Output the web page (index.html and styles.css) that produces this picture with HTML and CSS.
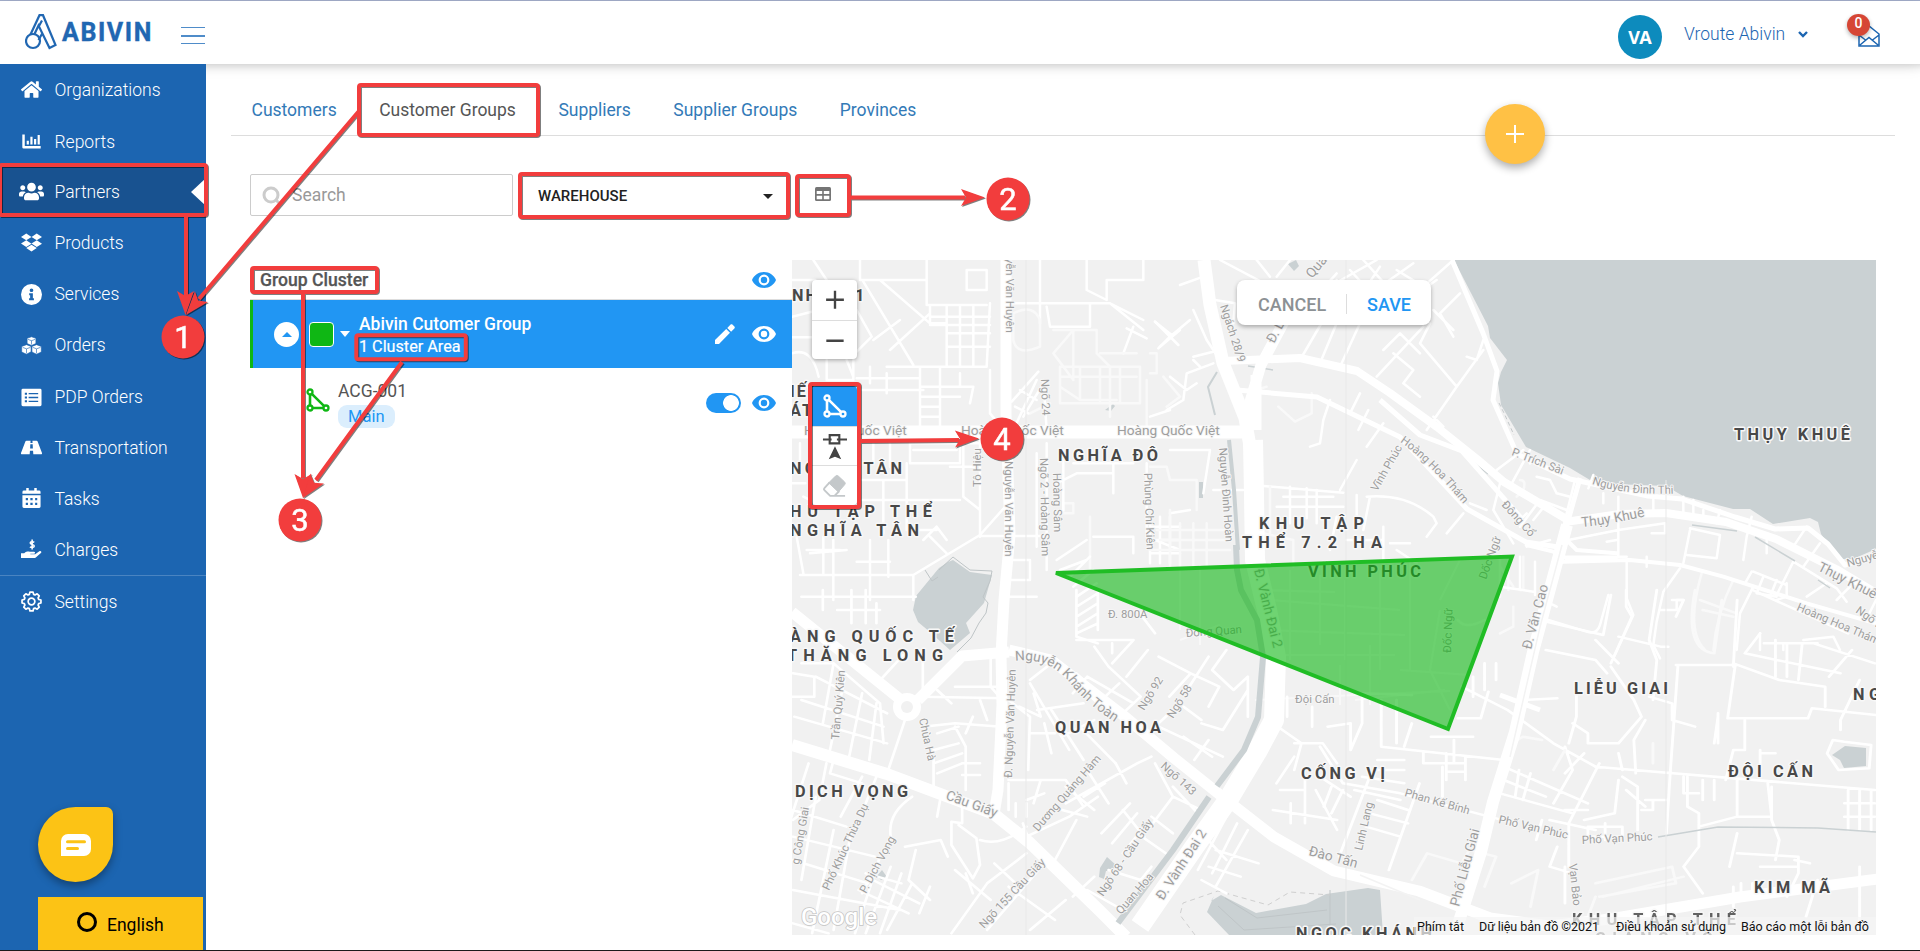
FILE: index.html
```html
<!DOCTYPE html>
<html lang="en">
<head>
<meta charset="utf-8">
<title>Abivin vRoute - Customer Groups</title>
<link rel="stylesheet" href="styles.css">
</head>
<body>
<svg class="defs" aria-hidden="true">
  <symbol id="eye" viewBox="0 0 24 16"><path fill-rule="evenodd" d="M12 0C6.500 0 1.900 3.300 0 8c1.900 4.700 6.500 8 12 8s10.100-3.300 12-8C22.100 3.300 17.500 0 12 0zm0 13.400a5.400 5.400 0 1 1 0-10.800 5.400 5.400 0 0 1 0 10.800zm0-8.600a3.200 3.200 0 1 0 0 6.400 3.200 3.200 0 0 0 0-6.400z"/></symbol>
  <symbol id="poly" viewBox="0 0 24 24"><g fill="none" stroke="currentColor" stroke-width="2.300"><path d="M4 6.500v11M6.500 20H17M5.800 5.800 18.200 18.200" stroke-width="2.600"/><circle cx="4" cy="4" r="2.500"/><circle cx="4" cy="20" r="2.500"/><circle cx="20" cy="20" r="2.500"/></g></symbol>
</svg>
<div class="app">
  <header class="topbar">
    <div class="brand">
      <svg class="brand-mark" viewBox="0 0 32 36"><g fill="none" stroke="#2167b2" stroke-width="2.200"><circle cx="8" cy="27" r="7"/><path d="M5.500 20.500 14.500 1.200h3.500L30.500 31l-6 3L13.500 11.500 9.500 20M14 12l3-5.500M17.500 19l-4 7"/></g></svg>
      <span class="brand-name">ABIVIN</span>
      <span class="burger"><i></i><i></i><i></i></span>
    </div>
    <div class="user">
      <span class="avatar">VA</span>
      <span class="user-name">Vroute Abivin</span>
      <svg class="chev" viewBox="0 0 10 7"><path d="M1 1l4 4 4-4" fill="none" stroke="#1c65b1" stroke-width="2.400"/></svg>
      <span class="mail">
        <svg viewBox="0 0 22 22"><g fill="none" stroke="#1c65b1" stroke-width="1.500"><path d="M1 9 11 1l10 8v12H1zM1 10l6.500 5M21 10l-6.500 5M2 20l9-7.500 9 7.500"/></g></svg>
        <b class="badge">0</b>
      </span>
    </div>
  </header>
  <div class="body">
    <nav class="side">
      <a class="nav"><svg class="ico" viewBox="0 0 576 512"><path d="M280.370 148.260L96 300.110V464a16 16 0 0 0 16 16l112.060-.290a16 16 0 0 0 15.920-16V368a16 16 0 0 1 16-16h64a16 16 0 0 1 16 16v95.640a16 16 0 0 0 16 16.050L464 480a16 16 0 0 0 16-16V300L295.670 148.260a12.190 12.190 0 0 0-15.300 0zM571.600 251.470L488 182.560V44.050a12 12 0 0 0-12-12h-56a12 12 0 0 0-12 12v72.610L318.470 43a48 48 0 0 0-61 0L4.340 251.470a12 12 0 0 0-1.600 16.900l25.500 31A12 12 0 0 0 45.150 301l235.220-193.740a12.190 12.190 0 0 1 15.300 0L530.900 301a12 12 0 0 0 16.900-1.600l25.500-31a12 12 0 0 0-1.700-16.930z"/></svg>Organizations</a>
      <a class="nav low"><svg class="ico" viewBox="0 0 24 20"><path d="M1.500 2h2.800v13H22.500v3H3a1.500 1.500 0 0 1-1.500-1.500zM6.500 9h2.500v4.500H6.500zM10.700 4.500h2.500v9h-2.500zM14.900 7h2.500v6.500h-2.500zM19 2.500h2.500v11H19z"/></svg>Reports</a>
      <a class="nav active"><svg class="ico wide" viewBox="0 0 640 512"><path d="M96 224c35.300 0 64-28.700 64-64s-28.700-64-64-64-64 28.700-64 64 28.700 64 64 64zm448 0c35.300 0 64-28.700 64-64s-28.700-64-64-64-64 28.700-64 64 28.700 64 64 64zm32 32h-64c-17.600 0-33.500 7.100-45.100 18.600 40.300 22.100 68.900 62 75.100 109.400h66c17.700 0 32-14.300 32-32v-32c0-35.300-28.700-64-64-64zm-256 0c61.900 0 112-50.100 112-112S381.900 32 320 32 208 82.100 208 144s50.100 112 112 112zm76.800 32h-8.300c-20.800 10-43.900 16-68.500 16s-47.600-6-68.500-16h-8.300C179.600 288 128 339.600 128 403.200V432c0 26.500 21.500 48 48 48h288c26.500 0 48-21.500 48-48v-28.800c0-63.600-51.600-115.200-115.200-115.200zm-223.700-13.400C161.500 263.100 145.600 256 128 256H64c-35.300 0-64 28.700-64 64v32c0 17.700 14.300 32 32 32h65.900c6.300-47.400 34.900-87.300 75.200-109.400z"/></svg>Partners<i class="notch"></i></a>
      <a class="nav"><svg class="ico" viewBox="0 0 528 512"><path d="M264.400 116.300l-132 84.300 132 84.300-132 84.300L0 284.100l132.300-84.300L0 116.300 132.300 32l132.100 84.300zM131.600 395.700l132-84.300 132 84.300-132 84.300-132-84.300zm132.800-111.600l132-84.300-132-83.600L395.700 32 528 116.300l-132.300 84.300L528 284.800l-132.300 84.300-131.300-85z"/></svg>Products</a>
      <a class="nav"><svg class="ico" viewBox="0 0 20 20"><path fill-rule="evenodd" d="M10 0a10 10 0 1 0 0 20 10 10 0 0 0 0-20zm0 4.200a1.700 1.700 0 1 1 0 3.500 1.700 1.700 0 0 1 0-3.500zM7.800 8.800h3.500v4.700h1v1.900H7.700v-1.900h1v-2.800h-.9z"/></svg>Services</a>
      <a class="nav"><svg class="ico" viewBox="0 0 24 20"><g stroke="#1c65b1" stroke-width=".7"><path d="M12 0l5 1.800v6L12 10 7 7.800v-6zM6.300 9l5.200 2v6.200L6.300 20 .8 17.500V11zM17.700 9l5.500 2v6.500L17.700 20l-5.200-2.500V11z"/><path d="M8 3l4 1.500L16 3M12 4.500V9M2 12.200l4.300 1.600 4.400-1.600M6.300 14v5M13.500 12.200l4.300 1.600 4.400-1.600M17.700 14v5" fill="none"/></g></svg>Orders</a>
      <a class="nav low"><svg class="ico" viewBox="0 0 22 20"><path fill-rule="evenodd" d="M2 .8h18a1.500 1.500 0 0 1 1.500 1.500v15.400a1.500 1.500 0 0 1-1.500 1.500H2a1.500 1.500 0 0 1-1.500-1.500V2.300A1.500 1.500 0 0 1 2 .8zM4 5v2h2.300V5zm4 .3v1.400h10V5.300zM4 9v2h2.300V9zm4 .3v1.400h10V9.300zM4 13v2h2.300v-2zm4 .3v1.400h10v-1.400z"/></svg>PDP Orders</a>
      <a class="nav"><svg class="ico" viewBox="0 0 23 20"><path fill-rule="evenodd" d="M6 2.500h4.500L10.300 5h2.400l-.2-2.500H17c.6 0 1 .3 1.200.8L23 16c.2.700-.2 1.500-1 1.500h-8.500l-.3-4h-3.400l-.3 4H1c-.8 0-1.200-.8-1-1.500L4.800 3.300c.2-.5.600-.8 1.200-.8zM10.200 6.500 10 11h3l-.2-4.500z"/></svg>Transportation</a>
      <a class="nav"><svg class="ico" viewBox="0 0 20 22"><path fill-rule="evenodd" d="M4.500 0h2.600v2.700h5.800V0h2.600v2.700H18a1.500 1.500 0 0 1 1.500 1.500V6H.5V4.200A1.500 1.500 0 0 1 2 2.700h2.500zM.5 7.500h19v12A1.500 1.500 0 0 1 18 21H2a1.500 1.500 0 0 1-1.500-1.500zM4 10.500v2.300h2.300v-2.300zm4.800 0v2.300h2.400v-2.300zm5 0v2.300H16v-2.300zM4 15.500v2.300h2.300v-2.300zm4.800 0v2.300h2.400v-2.300zm5 0v2.300H16v-2.300z"/></svg>Tasks</a>
      <a class="nav"><svg class="ico" viewBox="0 0 23 22"><path d="M0 15h3.500C6 13 8 13 9.500 13.400h4.700c1.600 0 1.600 2.200 0 2.200h-4v.7h5.300l4.600-3.400c1.600-1 3 .8 1.700 2l-5.600 4.800c-.6.500-1 .7-2 .7H0z"/><path d="M14.500 3.200c-.8-.7-4.400-1.200-4.400.8 0 2.200 4.400 1 4.400 3.300 0 2-3.600 1.700-4.700.8M12.200 0v11" fill="none" stroke="#fff" stroke-width="1.700"/></svg>Charges</a>
      <a class="nav last"><svg class="ico" viewBox="-11 -11 22 22"><path d="M9.900-1.600V1.600L7.500 2.200 6.900 3.700 8.100 5.900 5.900 8.100 3.700 6.900 2.200 7.500 1.600 9.900H-1.600L-2.200 7.500-3.700 6.900-5.900 8.100-8.100 5.900-6.900 3.700-7.500 2.200-9.900 1.600V-1.600L-7.500-2.200-6.900-3.700-8.100-5.900-5.900-8.100-3.700-6.900-2.200-7.500-1.600-9.900H1.600L2.200-7.500 3.700-6.900 5.900-8.100 8.100-5.900 6.900-3.700 7.500-2.200z" fill="none" stroke="#fff" stroke-width="1.800" stroke-linejoin="round"/><circle r="3.500" fill="none" stroke="#fff" stroke-width="1.800"/></svg>Settings</a>
      <div class="side-foot">
        <div class="chat"><svg viewBox="0 0 30 22"><path d="M7 0h16a7 7 0 0 1 7 7v8a7 7 0 0 1-7 7H0V7a7 7 0 0 1 7-7z" fill="#fff"/><path d="M6.500 7.700h17M6.500 14.500h10" stroke="#fcc315" stroke-width="3" stroke-linecap="round"/></svg></div>
        <div class="lang"><i class="ring"></i>English</div>
      </div>
    </nav>
    <main class="main">
      <div class="tabs">
        <a>Customers</a><a class="on">Customer Groups</a><a>Suppliers</a><a>Supplier Groups</a><a>Provinces</a>
        <button class="fab" aria-label="Add"></button>
      </div>
      <div class="tools">
        <div class="search"><svg viewBox="0 0 20 20"><g fill="none" stroke="#ccc" stroke-width="3"><circle cx="9" cy="9" r="7"/><path d="M14 14l4 4"/></g></svg>Search</div>
        <div class="select">WAREHOUSE<i></i></div>
        <div class="gridbtn"><svg viewBox="0 0 16 14"><rect width="16" height="14" rx="1.500" fill="#757575"/><path d="M1.700 4h5.500v3H1.700zM8.800 4h5.500v3H8.800zM1.700 8.700h5.500v3.500H1.700zM8.800 8.700h5.500v3.500H8.800z" fill="#fff"/></svg></div>
      </div>
      <div class="work">
        <section class="list">
          <div class="list-head"><span>Group Cluster</span><svg class="eye"><use href="#eye"/></svg></div>
          <div class="group">
            <span class="up"></span><span class="swatch"></span><i class="caret"></i>
            <div class="names"><b>Abivin Cutomer Group</b><span>1 Cluster Area</span></div>
            <svg class="pencil" viewBox="0 0 20 20"><path d="M0 16v4h4L15 8.800 11.200 5zM12.300 3.900l3.800 3.800 3.300-3.300c.6-.6.600-1.200 0-1.800L17.400.6c-.6-.6-1.300-.6-1.800 0z" fill="#fff"/></svg>
            <svg class="eye white"><use href="#eye"/></svg>
          </div>
          <div class="area">
            <svg class="shape"><use href="#poly"/></svg>
            <div class="area-names"><span>ACG-001</span><em>Main</em></div>
            <span class="toggle"></span>
            <svg class="eye"><use href="#eye"/></svg>
          </div>
        </section>
        <section class="map">
          <svg class="canvas" viewBox="792 260 1084 675">
            <rect x="792" y="260" width="1084" height="675" fill="#f1f1f1"/>
            <g fill="#cad1d3">
              <path d="M1454 260l34 66 2 12 17 22-6 12-3 11 3 22 25 42 44 21 20 12 23 4 53 2 17 10 50 13h17l23 15 37-6 8 4 3 12 7 10 10 15h15l23-10V260z"/>
              <path d="M939 568l9-6 5-2 17 12 22 3-8 28 0 0-18 20 4 10-20 17-20-18-12-10-5-12 3-14z"/>
              <path d="M1288 264l8-4 3 6-5 5z M1105 410l8-6 2 2-4 5z M1199 482h4v16h-4z M1100 868l7-11 9 8-4 6-6 0-2 8-5-2z M877 876l5-6 5 7-6 3z M1832 755l13-9 21 2v18l-22 2-4-8z"/>
              <path d="M1211 901l10-6 35 18 50-9 20-10 42-6 12 2 3 45h-154l-22-23 7-16z"/>
            </g>
            <path d="M925 570l7 11 6-4M939 570l14-13 17 13 22 1-2 10-7 16 5 6-2 10-7 10-8 15-14 14" fill="none" stroke="#bfc5c7" stroke-width="1"/>
            <g>
              <path d="M1218 906l26 24 92-6M1225 898l32 20 70-8M1330 890v40" fill="none" stroke="#bfc5c7" stroke-width="1"/>
              <path d="M1195 935l-15-20 3-12 35-12 50 14 22-13 40 3" fill="none" stroke="#cfcfcf" stroke-dasharray="5 4"/>
              <path d="M1499 403l5 10 10 22" fill="none" stroke="#c4c9cb" stroke-dasharray="4 3"/>
            </g>
            <!-- side streets, north-west -->
            <g class="minor" transform="translate(780 250) scale(.33333)">
              <path d="M36 90h70l20 60M240 30v60h200v-60M100 30l40 60M36 200l80-20M36 262h60M36 310q60-20 80 70M250 95l150 250M300 90l150 130M230 180l45 80-60 60M440 90v75h180M330 300l120-110M360 210l-80 60M450 170v50h50v130M500 170v180M540 170v180M580 170v180M450 200h180M450 225h180M500 250h130M500 290h130M320 350h300l10-190M560 60h60v60h-60zM420 350v180M480 350v180M420 410h120M420 440h120M420 470h60M420 500h60M540 370v40h40l-10 50M230 385h190M270 350v50M320 370v60M220 420h210M630 360v130l50 60M140 330v60h80v-60M200 330l20 50"/>
              <path d="M780 30v190M920 30v90l60 30M980 150v-60h110v-60M690 160h300l100 80M990 160l100 50M800 170l10 60h120v-70M1040 235l60 30M1060 230l-30 80M1125 215l70 70M1140 290l60-50"/>
              <path class="faint" d="M700 190q60-30 80 20v80q-70 30-80-20zM820 240h130v70l40 40v150M840 350h240v110h-240zM880 240v150l-60-80zM960 310h110M900 350v100M960 350v110M1020 350v110M840 380h230M1100 390v150M840 410l60 40h110M750 490l60-30M1150 380l50 60-40 30M930 800v160M850 760h30v30h-30z"/>
              <path d="M775 365l-80 90M700 540l70-150M790 400l-60 100M720 420l50 30M705 470l40 20M790 390l10 150M60 580v80M110 570v90M90 640h150M160 570v100M220 570v70M280 580v60M330 570v80M390 580h150v60h-150zM400 600h130M240 690h140M380 640v200h90M310 690v160M240 750h300M550 580v160l50 40M600 570v290M510 650h80M560 580h110M50 860l20 110M80 900h100M130 860v110M160 870v180M90 910l110-10M270 870v180M325 870v110M230 935h100M60 975h340M400 975l200-120 80-90M400 975v75M450 860l50 50M430 870l40-40 30 40M600 858h200M690 930h60v60h-60M770 610v280M800 580v380M850 600v180M1000 640v90M1100 640v220l100 40M830 930l90-60M840 960l80-30M880 640h180M870 980l60-60M880 1010l60-50M890 1040l60-40M830 700l60-30h110M940 860h120v50M1110 810v130M1140 800v140M1170 800v140M1110 830h90M1110 870h90M1110 910h90M690 1040h80M36 700h40M70 740l40 20"/>
            </g>
            <!-- side streets, centre north -->
            <g class="minor" transform="translate(1150 250) scale(.33333)">
              <path d="M90 105l70-25M210 30l190 100M320 30l40 50M380 80l40-50M130 180l40 90 40 60M15 215l50 40-40 40M60 260l60-50M130 320l80-20M60 380l50 40 30-20M190 340l-80 30-10 80-50 30M130 330l20 20M195 150l60 10-5 60M450 330l70-120M510 340l50-120M570 350l60-130M680 380l140-150M730 310l60 50-30 40 50 40M700 300l50-50M850 180l60 60M750 250l60 60M840 220l-30 60 110 130M920 410l80-110M930 130l-60 60 40 70M1000 270l-20 60-30-10M830 540l90-130M850 500l30 30M560 90l100 120M600 60l100 110M640 30l90 100M520 120l160-90M620 160l170-120M700 200l160-110M650 110l40-60M740 60l80 50 90-80M480 160l80-90"/>
              <path d="M630 430l-30 60M655 480l-30 60M700 520l-50 70M540 450l-20 60-10 70-30 10M60 600h120M180 600l-20 130M0 500l60-20M280 720h-90M120 780l-60 10M340 708l240 20M420 710v110M470 715v90M500 720v100M380 770h200M400 740h150M570 720l50-90M620 735v100M660 740l-20 100M650 740q120-10 200 60l10 20-30 40M560 800l-20 100M700 830v120M720 880h60M590 870h110M740 900l60 40M890 850l50-60M960 760l50 20M1050 700l-20 80M1140 600l-60 110M1030 780l60 100M1040 660l80-60 20 40"/>
              <path class="faint" d="M385 470l50 45 50-25v-60M320 420l30-10M0 650h50l10 40h80M140 690v90M0 310h20v60h-20"/>
              <path class="faint" d="M360 710v140M20 840h220M30 870h210M60 780v170M90 820v130M130 820v130M170 820v130M0 900h240M340 850l90 20v80M1090 1010l-40-60M1050 920v120M1075 920v100M1120 920v100"/>
            </g>
            <!-- side streets, north-east -->
            <g class="minor" transform="translate(1500 250) scale(.33333)">
              <path d="M110 680l40 10 20 40 40 10M265 715l15-40M225 690l-60 240M310 730v30M355 740v50M460 730v50M550 740v60M580 750v50M610 780v30M660 780l-10 40M755 800l-15 60-10 70M200 780l-80-30-60 80M140 760l-40 50M80 790l-30 30M355 800v120M205 870l150-30 140-20v30h-40M570 840l-20 100M570 835l90 20-10 70-90-10M440 920v30M200 920h180M380 935v110l20 50-60 130M325 1035l-25 90q-10 30-40 20l-130-40M540 955l-50 70-20 90-10 70 20 40M480 1080h50v-30h20M760 1010l-40 80-10 110M755 965l-20 35M760 965l100 40M790 980l-20 50 60 10M830 990l-20 50M860 1000v40l-30 10M880 935l-50 100M960 880l-50 70M920 830l-40 60M800 870v40M880 935l130 80 30 40M920 1040l60-40M1050 1010l-40 40M1128 1050l-30 60M780 1150v50M910 1170l90-10 20 40M850 1180v20M60 920v100M105 935v100M0 1010l100 15M130 1050l40 20M350 870l-30 5M80 890l70-20"/>
              <path class="faint" d="M605 970q-50 170 10 230M600 1050l110 40M700 990q-50 100-60 210M0 1150l40-20v-60M60 690q20 0 10 30l-20 20"/>
              <path d="M190 935l200-5 150 15 130 35 250 80 208 60M80 885l80 20 40 20 150 5M200 870l30 30 120 10" style="stroke-width:12"/>
            </g>
            <!-- side streets, south-west -->
            <g class="minor" transform="translate(780 590) scale(.35714 .33333)">
              <path d="M60 20h320M120 0v60M200 0v100M240 0v100M270 40v60M160 60h120M36 250l60 10v60h-60M60 220h90l-30 180M100 260l200 110M40 380l260 80M60 330l230 80M180 270l-40 210M230 310l-40 210M270 340l-20 170M150 220l130 120 10 120M350 390l-50 160M285 265l60-70M400 190v130M400 320l230 5M440 300l40 40M490 290h130M560 330l20 60M540 380l-20 50M400 410l90-10 130 10M490 410l30 60v130M440 430l60-20M430 480l70-20M430 520l80-30M440 550l70-30M430 500v100M510 520h50M510 555h50M590 200v90l40 50M700 270l60-50M700 280l110 200M710 310l20 70-60-30M640 330l60 50-5 160M700 430h70M740 400l20 90M760 360l90 150M830 400l110 120M790 440l90-50M850 340l-130 20M820 310l40-50 130 80M870 290l-40-40M800 250l90 90 60-60M830 150h160l-60 70M930 190v-30M880 170l40 60 90 90-60 60M830 50l60-40M830 80l60-40M830 110l60-40M830 130l60-30M830 0v140l60 20M890 0v120M1000 60l50 70M1060 200l90 50-60 70M1030 180l-60 80M1200 200l-60 100M1150 250l80 40-30 60M1250 180l-40 60 60 60 40-40M1100 360l-50 50M1130 350l50 40M1180 400l60 20 70-120M1310 260v120M1130 440l80 60M1200 450l-40 60M1060 410l120 60 60 30"/>
              <path d="M640 570h160l50 80M730 570l-20 70M690 630l50-20M640 580v80M660 640v40M690 640v40M700 760l-20-60M800 640l200-120 40-20M880 660l-80-70M850 620l60-40M860 540l60 100M940 520l30 60M690 740l120-60 80-60M770 810l60-120M860 680l-70-20M1050 520l50 100-70 100M1100 620l80 40M1100 590l70 80M1040 680l60 50M1000 730l80 60M960 660l60 80M900 730l80-90M930 760l70-90M960 790l60-80M880 860l-60 60M860 900l100 60M920 840l90 30 30-40M1190 740l60 70M1250 680l-80 160M1280 700l-70 150M1310 720l-90 170M1220 780l120 40M1200 830l90 30M1180 870l70 40M1380 400l80 60-20 80M1440 460h80l40 60M1390 580l50-80M1400 600h70M1430 640v60M1470 560v140M1500 600l60 120M1380 660l180 30M1420 320v60M1490 350v60M1300 500l60-100"/>
              <path d="M440 680l10-60 60 30v50l-30-5 0 70 60 100 20-40-10-80-50-40M560 750q60 20 130-40M130 520l-20 110-74 60M80 520l-60 200M150 510l-10 40 90 30M230 560l-60 120M270 560l-30 80M370 620q-70 50-60 120l-80 170M36 660l150 50M36 740l230 60M36 810l210 70M36 900l300 60M100 620l-40 250M150 720l-60 310M200 720l-50 300M240 850l100 30M280 800l-70 230M310 830l-70 200M340 850l-60 180M370 880l-70 140M220 900l140 70M260 870l130 70M350 770l100-20 20 50M380 780l-20 90 60 60M490 840l100 90M600 820l60 60M690 790l-110 90-100 150M740 820l-160 200M800 930l-100 90M640 890l130 100M520 850l20 60M36 1000l100 30M420 890l-30 80"/>
            </g>
            <!-- side streets, south-east -->
            <g class="minor" transform="translate(1320 590) scale(.38272 .33333)">
              <path d="M0 470l60 110 150 30 300 90M20 410l60-10v80M80 480l30-80V310l130 5M160 330v140l320 40M200 330v130M240 400l-20 70M290 440h110M350 450v70M330 490v80M380 500v70M330 520h50M330 545h50M270 490v30h60M0 560l80 60M30 590l-20 60M60 600l-30 70M90 600l120 30M110 560l110 20M150 540h70M150 510h70M130 560l-80 240M150 630l80 30M130 670l100 30M120 710l90 30M260 580l-80 260M320 530v90M360 385h60l20-80M400 260v60M430 220v80M460 220v50M370 290l120 70 120 100 110 70M480 530l220 110M480 570l110 50M520 540l-10 80M550 550l-20 80M640 470l20 70-50 100M470 610l190 60M640 660h60M600 690l120 30M640 830v110M620 770l-20 60 60 20M650 740v90M580 690l-15 60M530 330l90-5"/>
              <path d="M590 180l130 30 30 40M720 150l60 70M590 95l150 40 20-120M800 0v50l15 30-55 140M880 0l-20 150 20 60-10 120M780 140l110 30h20M920 30h30l-20 50M860 320l60 20v50l60 20M670 290v90l-20 80M760 230l60 100 20 50-60 80h-80v-30l-40-30M850 390l-30 60 5 100M690 490l-50 60M730 520l-80 180v40M780 490l10 50M720 530l100 10 630 60M930 225h160M935 230l-20 320-10 180M1085 225l-20 160h210l10-30 168 20M1090 30l-10 200M1130 0l250 130M1150 130l-40 60 250 60M1160 160h140M1190 150v110M1220 160v100M1260 160l-10 110M1080 220l120 50 120 20v60M1390 180l-60 80M1290 160l160 60M1410 270l-50 120v30M1040 370v90M1030 460l10-80M1110 390v90h-30l-20 90M1150 480v80M1190 490h-40M960 560v90l30 20v100l-40 60 50 80M1000 570v60M1030 570v60M1090 570v110M950 560v50h40M990 710l100-30h90l-10-100M1180 590v100l20 60-10 60M850 630h60M840 660h30v-30M790 560l40 30v130M780 570l-10 100-80 20M800 600l50 50M700 710h90v30h-90zM745 700v50M1380 600v120M1410 600v120M1440 600v120M1370 640h80M1370 680h80M1090 730l-20 100M1090 790l160 10v50M1280 820l-40-10M1150 830h100M1250 850l-30 70M1100 880v50M1080 890v60M1130 880v40M1270 980l30-110M1410 830v200M1340 450l30 5 70 10-5 70-80 5-30-50z"/>
              <path class="faint" d="M870 520v-60M980 0q-30 180 50 190l20-160M1000 60l80 20M240 870l40-80 90 30 20-40 70 20-30 90M500 880l70-40-20 110M720 920l-20 60M720 880l200-50 10 50-200 40M740 920l210-60M500 460l30-20 50 10M430 90q-50 30-70 0M640 480l-30 60"/>
            </g>
            <!-- side streets under the drawn area -->
            <g class="faint-grid">
              <path d="M1180 570v60M1200 565v80M1290 570v90M1320 575v70M1345 580v80M1380 570v100M1410 560v110M1270 600l130 10M1265 630l140 5M1285 655h110M1440 610l-10 60 20 40M1460 560l-20 40M1255 590l80 2M1370 645v60M1400 670l70 5M1180 640l40-15M1340 665v40M1445 690l-90 10M1255 700l100-5 95-4"/>
            </g>
            <!-- small canals -->
            <g fill="none" stroke="#cad1d3">
              <path stroke-width="2" d="M1217 372l-9 15 7 28"/>
              <path stroke-width="1.500" d="M1248 366l25 4M1470 460l18 14M1692 525l45 6M1755 537l40 24M1818 580l12 8M1658 837l60-10 100 1 58 4"/>
            </g>
            <!-- main roads -->
            <g class="road">
              <path stroke-width="11" d="M1006 260v155l2 60 2 60-6 65-3 55 1 50-4 85-4 24"/>
              <path stroke-width="13" d="M792 432h455"/>
              <path stroke-width="13" d="M1204 260l6 45 13 58 22 55 8 45"/>
              <path stroke-width="20" d="M1253 440l1 55 1 65 12 50 9 47-2 63-16 30-30 50-33 46-55 80"/>
              <path stroke-width="11" d="M1285 320l-24 45-15 50M1256 375v55"/>
              <path stroke-width="8" d="M1223 361l77-3 57 13 33 22 47 34 40 32 27 23 64 38"/>
              <path stroke-width="5" d="M1237 390l80 7 83 40 67 72 59 33 32 5M1380 400l40 35 42 16 60 68M1452 260l31 73 14 38-4 29 24 54 53 25 78 17 34 3 53 18 40 12 33-1 20 16 17 21 33-10"/>
              <path stroke-width="8" d="M1565 522l55-8 46-1 60 9 50 17 60 30 40 24"/>
              <path stroke-width="12" d="M1567 525l-12 45-22 82-18 80-22 70-12 50-26 82"/>
              <path stroke-width="5" d="M1580 478l-14 50M1500 695l40 15"/>
              <path stroke-width="11" d="M792 612l109 88M918 700l44-44 47-4M1009 650l42 10 73 56 50 42 50 40 50 39 60 34 85 20 71 27 59 8 61-7 130-22 146-19"/>
              <path stroke-width="12" d="M792 745l95 29 107 40 36 29 70 68 26 26"/>
              <circle cx="907" cy="707" r="14" fill="#fff" stroke="none"/><circle cx="907" cy="707" r="6" fill="#f1f1f1" stroke="none"/>
            </g>
            <g fill="none" stroke="#cad1d3" stroke-linejoin="round">
              <path stroke-width="4" d="M1229 440l5 50 4 60"/>
              <path stroke-width="6" d="M1236 545l1 25 4 20 16 30 6 37-5 60-14 33-27 36M1209 797l-36 53-55 73"/>
            </g>
            <g fill="none" stroke="#f3f3f3" stroke-width="1.500"><path d="M1562 545l-22 82-30 130M1420 900l-60-25"/></g>
            <g stroke="#e9e9e9" stroke-width="1"><path d="M1026 260v675M1346 260v675M1666 480v455"/></g>
            <defs>
              <path id="p1" d="M1015 661q35-4 55 22t60 48"/>
              <path id="p2" d="M1400 442q30 20 80 82"/>
              <path id="p3" d="M1592 484q40 14 105 8"/>
              <path id="p4" d="M1582 527q35-3 90-17"/>
            </defs>
            <g class="st">
              <text transform="translate(1006 258) rotate(90)">yễn Văn Huyên</text>
              <text transform="translate(1005 461) rotate(90)">Nguyễn Văn Huyên</text>
              <text transform="translate(981 487) rotate(-90)">Tô Hiệu</text>
              <text transform="translate(1041 379) rotate(88)">Ngõ 24</text>
              <text transform="translate(1040 458) rotate(89)">Ngõ 2 - Hoàng Sâm</text>
              <text transform="translate(1053 473) rotate(89)">Hoàng Sâm</text>
              <text transform="translate(1144 473) rotate(88)">Phùng Chí Kiên</text>
              <text transform="translate(1220 306) rotate(72)">Ngách 28/9</text>
              <text transform="translate(1219 448) rotate(86)">Nguyễn Đình Hoàn</text>
              <text transform="translate(1377 492) rotate(-60)">Vĩnh Phúc</text>
              <text><textPath href="#p2">Hoàng Hoa Thám</textPath></text>
              <text transform="translate(1511 455) rotate(21)">P. Trích Sài</text>
              <text transform="translate(1501 505) rotate(48)">Đông Cổ</text>
              <text transform="translate(1486 580) rotate(-70)">Dốc Ngữ</text>
              <text><textPath href="#p3">Nguyễn Đình Thi</textPath></text>
              <text transform="translate(1848 567) rotate(-16)">Nguyễn</text>
              <text transform="translate(1796 610) rotate(23)">Hoàng Hoa Thám</text>
              <text transform="translate(1855 612) rotate(35)">Ngõ 2</text>
              <text transform="translate(1108 618)">Đ. 800A</text>
              <text transform="translate(1186 637) rotate(-4)">Đông Quan</text>
              <text transform="translate(1295 703)">Đội Cấn</text>
              <text transform="translate(1451 653) rotate(-88)">Đốc Ngữ</text>
              <text transform="translate(839 740) rotate(-85)">Trần Quý Kiên</text>
              <text transform="translate(919 719) rotate(78)">Chùa Hà</text>
              <text transform="translate(1012 778) rotate(-88)">Đ. Nguyễn Văn Huyên</text>
              <text transform="translate(1144 711) rotate(-58)">Ngõ 92</text>
              <text transform="translate(1173 719) rotate(-58)">Ngõ 58</text>
              <text transform="translate(1160 767) rotate(42)">Ngõ 143</text>
              <text transform="translate(1038 832) rotate(-49)">Dương Quảng Hàm</text>
              <text transform="translate(799 865) rotate(-80)">g Công Giai</text>
              <text transform="translate(829 891) rotate(-65)">Phố Khúc Thừa Dụ</text>
              <text transform="translate(866 894) rotate(-62)">P. Dịch Vọng</text>
              <text transform="translate(984 929) rotate(-47)">Ngõ 155 Cầu Giấy</text>
              <text transform="translate(1103 897) rotate(-56)">Ngõ 68 - Cầu Giấy</text>
              <text transform="translate(1121 915) rotate(-49)">Quan Hoa</text>
              <text transform="translate(1404 796) rotate(16)">Phan Kế Bính</text>
              <text transform="translate(1362 851) rotate(-77)">Linh Lang</text>
              <text transform="translate(1498 823) rotate(13)">Phố Vạn Phúc</text>
              <text transform="translate(1582 844) rotate(-3)">Phố Vạn Phúc</text>
              <text transform="translate(1569 864) rotate(84)">Vạn Bảo</text>
            </g>
            <g class="st big">
              <text x="804" y="435">Hoàng Quốc Việt</text>
              <text x="961" y="435">Hoàng Quốc Việt</text>
              <text x="1117" y="435">Hoàng Quốc Việt</text>
              <text transform="translate(1312 279) rotate(-50)">Quán</text>
              <text transform="translate(1274 344) rotate(-62)">Đ. Lạc</text>
              <text><textPath href="#p4">Thụy Khuê</textPath></text>
              <text transform="translate(1817 570) rotate(27)">Thụy Khuê</text>
              <text><textPath href="#p1">Nguyễn Khánh Toàn</textPath></text>
              <text transform="translate(945 799) rotate(20)">Cầu Giấy</text>
              <text transform="translate(1163 901) rotate(-57)">Đ. Vành Đai 2</text>
              <text transform="translate(1254 570) rotate(76)">Đ. Vành Đai 2</text>
              <text transform="translate(1531 650) rotate(-75)">Đ. Văn Cao</text>
              <text transform="translate(1308 855) rotate(15)">Đào Tấn</text>
              <text transform="translate(1459 907) rotate(-75)">Phố Liễu Giai</text>
            </g>
            <g class="place">
              <text x="792" y="301">NH</text><text x="855" y="301">1</text>
              <text x="790" y="397">IẾT</text><text x="790" y="416">ÁT</text>
              <text x="790" y="474" textLength="114">NGHĨA TÂN</text>
              <text x="790" y="517" textLength="144">HU TẬP THỂ</text>
              <text x="790" y="536" textLength="131">NGHĨA TÂN</text>
              <text x="1058" y="461" textLength="102">NGHĨA ĐÔ</text>
              <text x="1259" y="529" textLength="107">KHU TẬP</text>
              <text x="1242" y="548" textLength="142">THỂ 7.2 HA</text>
              <text x="1308" y="577" textLength="115">VĨNH PHÚC</text>
              <text x="1734" y="440" textLength="118">THỤY KHUÊ</text>
              <text x="790" y="642" textLength="166">ÀNG QUỐC TẾ</text>
              <text x="787" y="661" textLength="158">THĂNG LONG</text>
              <text x="1055" y="733" textLength="108">QUAN HOA</text>
              <text x="795" y="797" textLength="115">DỊCH VỌNG</text>
              <text x="1301" y="779" textLength="86">CỐNG VỊ</text>
              <text x="1574" y="694" textLength="96">LIỄU GIAI</text>
              <text x="1853" y="700" textLength="60">NGỌC</text>
              <text x="1728" y="777" textLength="87">ĐỘI CẤN</text>
              <text x="1754" y="893" textLength="78">KIM MÃ</text>
              <text x="1296" y="939" textLength="138">NGỌC KHÁNH</text>
              <g opacity=".85"><text x="1572" y="925" textLength="166">KHU TẬP THỂ</text><text x="1595" y="944" textLength="120">GIẢNG VÕ</text></g>
            </g>
            <path d="M1056 573L1512 556.500 1448 729z" fill="#0fb714" fill-opacity=".6" stroke="#20bd25" stroke-width="4"/>
            <text class="google" x="801" y="925">Google</text>
            <rect x="1414" y="917" width="462" height="18" fill="#f5f5f5" opacity=".7"/>
            <g class="legal"><text x="1417" y="931" textLength="47">Phím tắt</text><text x="1479" y="931" textLength="120">Dữ liệu bản đồ ©2021</text><text x="1616" y="931" textLength="110">Điều khoản sử dụng</text><text x="1741" y="931" textLength="128">Báo cáo một lỗi bản đồ</text></g>
          </svg>
          <div class="ctl zoomctl">
            <svg viewBox="0 0 45 40"><path d="M14 20h18M23 11v18" stroke="#444" stroke-width="2.400"/></svg>
            <svg viewBox="0 0 45 40"><path d="M14 20.500h18" stroke="#444" stroke-width="2.400"/></svg>
          </div>
          <div class="ctl drawctl">
            <span class="sel"><svg class="shape"><use href="#poly"/></svg></span>
            <svg viewBox="0 0 45 40"><path d="M10.500 13h25M17.500 8.500h10v8.500h-10z" stroke="#444" stroke-width="2.200" fill="none"/><path d="M19.500 11h5.500v4.500h-5.500z" fill="#fff"/><path d="M23 20l6.500 13.500-6.500-2.500-6.500 2.500z" fill="#444"/></svg>
            <svg viewBox="0 0 45 40"><path d="M23.500 10.500q1.500-1.500 3 0l6.500 6q1.500 1.500 0 3l-6.500 7.500-10-9.500z" fill="#c4c8ca" stroke="#c4c8ca"/><path d="M17.500 17l-5.500 6c-.7.700-.7 1.300 0 2l6 6h15.500M17.500 31h5l5-5" fill="none" stroke="#c4c8ca" stroke-width="2"/></svg>
          </div>
          <div class="confirm"><span>CANCEL</span><i></i><b>SAVE</b></div>
        </section>
      </div>
    </main>
  </div>
</div>
<svg class="notes" viewBox="0 0 1920 951">
  <g fill="none" stroke="#f23d3d" stroke-width="4">
    <rect x="0" y="165" width="206" height="50" rx="2"/>
    <rect x="359" y="85" width="179" height="50" rx="2"/>
    <rect x="520" y="174" width="268" height="43" rx="2"/>
    <rect x="797" y="176" width="52" height="39" rx="2"/>
    <rect x="252" y="268" width="125" height="24" rx="2"/>
    <rect x="356.300" y="335.300" width="109.500" height="24" rx="2"/>
    <rect x="810" y="384" width="49" height="123" rx="2"/>
    <path d="M186 217v82M359 111 199 299M851 197.500h114M303 294v184M402 362 316 480M861 441l98-1"/>
  </g>
  <g fill="#f23d3d">
    <path d="M0 0-24-8.500-19 0-24 8.500z" transform="translate(185.500 315) rotate(90)"/>
    <path d="M0 0-24-8.500-19 0-24 8.500z" transform="translate(186 315) rotate(130)"/>
    <path d="M0 0-24-8.500-19 0-24 8.500z" transform="translate(985 197.500)"/>
    <path d="M0 0-24-8.500-19 0-24 8.500z" transform="translate(303 498) rotate(90)"/>
    <path d="M0 0-24-8.500-19 0-24 8.500z" transform="translate(303 498) rotate(126)"/>
    <path d="M0 0-24-8.500-19 0-24 8.500z" transform="translate(979 438.500) rotate(-1)"/>
    <circle cx="183" cy="337" r="21.500"/><circle cx="1008" cy="199" r="21.500"/><circle cx="300" cy="520" r="21.500"/><circle cx="1002" cy="439" r="21.500"/>
  </g>
  <g class="nums"><text x="183" y="348">1</text><text x="1008" y="210">2</text><text x="300" y="531">3</text><text x="1002" y="450">4</text></g>
</svg>
</body>
</html>
```
FILE: styles.css
```css
* { box-sizing: border-box; }
body { margin: 0; font-family: Roboto, "Liberation Sans", sans-serif; background: #fff; overflow: hidden; }
.defs { position: absolute; width: 0; height: 0; }
.app { height: 951px; display: flex; flex-direction: column; border-top: 1px solid #a3aecb; border-bottom: 1px solid #1b1b1b; }
.topbar { height: 63px; flex: none; display: flex; justify-content: space-between; background: #fff; box-shadow: 0 2px 14px rgba(0,0,0,.1); }
.brand { display: flex; padding: 13px 0 0 25px; }
.brand-mark { width: 32px; height: 36px; }
.brand-name { font: 700 25px/37px Roboto, sans-serif; letter-spacing: 1.600px; color: #2167b2; margin: 0 0 0 5px; width: 119px; -webkit-text-stroke: .4px #2167b2; }
.burger { display: flex; flex-direction: column; gap: 6.500px; padding-top: 13px; width: 24px; }
.burger i { height: 1px; background: #4f8cc9; }
.burger i:nth-child(2) { height: 2px; }
.user { display: flex; padding-right: 40px; }
.avatar { width: 44px; height: 44px; border-radius: 50%; background: #0d8bbd; color: #fff; font: 700 18px/45px "Noto Sans", sans-serif; text-align: center; margin: 14px 22px 0 0; }
.user-name { font-weight: 300; font-size: 17.500px; line-height: 21px; color: #1c65b1; margin-top: 23px; width: 102px; white-space: nowrap; }
.chev { width: 10px; height: 7px; margin: 30px 50px 0 12px; }
.mail { position: relative; width: 22px; padding-top: 24px; }
.mail svg { width: 22px; height: 22px; display: block; }
.badge { position: absolute; left: -11px; top: 13px; width: 23px; height: 22px; border-radius: 50%; background: #d64635; color: #fff; font: 500 14px/19px Roboto, sans-serif; text-align: center; box-shadow: 0 2px 4px rgba(0,0,0,.3); }
.body { flex: 1; display: flex; min-height: 0; }
.side { width: 206px; background: #1c65b1; display: flex; flex-direction: column; position: relative; z-index: 1; }
.nav { height: 51.150px; flex: none; display: flex; align-items: center; color: #fff; font-weight: 300; font-size: 17.500px; padding-left: 21px; gap: 12.500px; position: relative; white-space: nowrap; }
.low { padding-top: 2px; }
.ico { width: 21px; height: 21px; fill: #fff; overflow: visible; }
.nav .wide { width: 25px; margin: 0 -2px; }
.active { background: #185290; }
.notch { position: absolute; right: 0; top: 12px; border: solid transparent; border-width: 14px 15px 14px 0; border-right-color: #fff; }
.last { border-top: 1px solid #4a84c1; padding-top: 1px; }
.side-foot { margin-top: auto; padding-left: 38px; }
.chat { width: 75px; height: 75px; border-radius: 50% 7px 50% 50%; background: #fcc315; box-shadow: 0 4px 8px rgba(0,0,0,.35); display: flex; align-items: center; justify-content: center; margin-bottom: 15px; padding-top: 1px; }
.chat svg { width: 30px; height: 22px; }
.lang { width: 165px; height: 53px; background: #fcc315; color: #000; font-size: 17.500px; display: flex; align-items: center; padding: 2px 0 0 39px; gap: 10px; }
.ring { width: 20px; height: 20px; border: 3px solid #000; border-radius: 50%; margin-top: -6px; }
.main { flex: 1; padding: 19px 25px 0; min-width: 0; box-shadow: inset 0 12px 10px -11px rgba(0,0,0,.16); }
.tabs { display: flex; gap: 42.500px; height: 53px; padding: 0 20.500px; border-bottom: 1px solid #ddd; position: relative; color: #337ab7; font-size: 17.500px; line-height: 55px; }
.on { color: #555; }
.fab { position: absolute; left: 1254px; top: 21px; width: 60px; height: 60px; border: 0; border-radius: 50%; background: linear-gradient(#fff,#fff) center/18px 2px no-repeat, linear-gradient(#fff,#fff) center/2px 18px no-repeat, #ffc145; box-shadow: 0 4px 9px rgba(0,0,0,.32); }
.tools { display: flex; padding: 38px 0 0 19px; height: 124px; gap: 8px; align-items: flex-start; }
.search { width: 263px; height: 42px; border: 1px solid #ccc; border-radius: 2px; display: flex; align-items: center; color: #999; font-size: 17.500px; padding-left: 11px; gap: 10px; }
.search svg { width: 20px; height: 20px; margin-top: 2px; }
.select { width: 265px; height: 42px; display: flex; align-items: center; justify-content: space-between; font-weight: 500; font-size: 15px; color: #222; padding: 2px 13px 0 17px; }
.select i { border: solid transparent; border-width: 5px 5px 0; border-top-color: #222; }
.gridbtn { width: 50px; height: 40px; padding: 13px 0 0 21px; }
.gridbtn svg { width: 16px; height: 14px; display: block; }
.work { display: flex; padding-left: 19px; margin-right: 19px; }
.list { width: 542px; flex: none; }
.eye { width: 24px; height: 16px; fill: #2196f3; flex: none; }
.white { fill: #fff; }
.list-head { height: 40px; border-bottom: 1px solid #ddd; display: flex; justify-content: space-between; align-items: center; padding: 0 16px 0 10px; font-weight: 500; font-size: 17.600px; color: #555; -webkit-text-stroke: .25px #555; }
.list-head span { padding-top: 1px; }
.group { height: 68px; background: #2196f3; border-left: 3px solid #0fb714; display: flex; align-items: center; padding: 0 16px 0 21px; color: #fff; }
.up { width: 25px; height: 25px; border-radius: 50%; background: #fff; display: flex; align-items: center; justify-content: center; margin-right: 10px; }
.up::after { content: ""; border: solid transparent; border-width: 0 5px 5px; border-bottom-color: #2196f3; }
.swatch { width: 25px; height: 25px; background: #0fb714; border: 1px solid #fff; border-radius: 4px; margin-right: 6px; }
.caret { border: solid transparent; border-width: 6px 5.500px 0; border-top-color: #fff; margin-right: 9px; }
.names { flex: 1; display: flex; flex-direction: column; padding-top: 2px; }
.names b { font-weight: 500; font-size: 17.500px; line-height: 24px; }
.names span { font-size: 16.200px; line-height: 22px; -webkit-text-stroke: .2px #fff; }
.pencil { width: 20px; height: 20px; margin-right: 17px; }
.area { display: flex; align-items: center; padding: 0 16px 0 56px; height: 70px; }
.shape { width: 24px; height: 24px; color: #0fb714; margin: -6px 8px 0 0; }
.area-names { flex: 1; display: flex; flex-direction: column; align-items: flex-start; color: #555; font-size: 17.500px; line-height: 23px; padding-top: 2px; }
.area-names em { font-style: normal; font-size: 16.500px; line-height: 23px; padding: 0 10px; border-radius: 9px; background: #dbeefd; color: #2196f3; margin-top: 2px; }
.toggle { width: 35px; height: 20px; border-radius: 10px; background: radial-gradient(circle at 25px 10px, #fff 7.500px, #2196f3 8.200px); margin-right: 11px; }
.map { flex: 1; height: 675px; position: relative; }
.canvas { width: 1084px; height: 675px; display: block; }
.minor path { fill: none; stroke: #fff; stroke-width: 7.500; stroke-linejoin: round; stroke-linecap: round; }
.minor .faint { stroke: #f9f9f9; }
.faint-grid path { fill: none; stroke: #fff; stroke-width: 2; opacity: .5; }
.road { fill: none; stroke: #fff; stroke-linejoin: round; }
.st { font-size: 11.400px; fill: #9e9e9e; stroke: #f6f6f6; stroke-width: 2px; paint-order: stroke; stroke-linejoin: round; }
.big { font-size: 13.700px; }
.place { font-size: 16.300px; font-weight: 700; fill: #484848; stroke: #f8f8f8; stroke-width: 3px; paint-order: stroke; stroke-linejoin: round; letter-spacing: 2px; }
.google { font-size: 24px; fill: #fff; stroke: #c4c4c4; stroke-width: 1.500px; paint-order: stroke; font-weight: 500; }
.legal { font-size: 12.500px; fill: #111; }
.ctl { position: absolute; left: 20px; width: 45px; background: #fff; border-radius: 4px; box-shadow: 0 1px 4px rgba(0,0,0,.35); overflow: hidden; }
.zoomctl { top: 20px; }
.drawctl { top: 126px; }
.ctl > svg, .sel { display: block; width: 45px; height: 39.500px; }
.ctl > * + * { border-top: 1px solid #ddd; }
.sel { background: #2196f3; padding: 8px 0 0 11px; }
.sel .shape { color: #fff; margin: 0; }
.confirm { position: absolute; left: 445px; top: 20px; width: 194px; height: 45px; background: #fff; border-radius: 8px; box-shadow: 0 2px 4px rgba(0,0,0,.3); display: flex; align-items: center; font-size: 18px; font-weight: 500; color: #8c9194; padding: 3px 20px 0 21px; justify-content: space-between; }
.confirm i { width: 1px; height: 20px; background: #ddd; }
.confirm b { font-weight: 500; color: #2196f3; }
.notes { position: absolute; left: 0; top: 0; z-index: 5; width: 1920px; height: 951px; pointer-events: none; filter: drop-shadow(1px 1px .6px rgba(0,0,0,.5)); }
.nums { fill: #fff; stroke: #fff; stroke-width: .5px; font-size: 31px; text-anchor: middle; }
```
